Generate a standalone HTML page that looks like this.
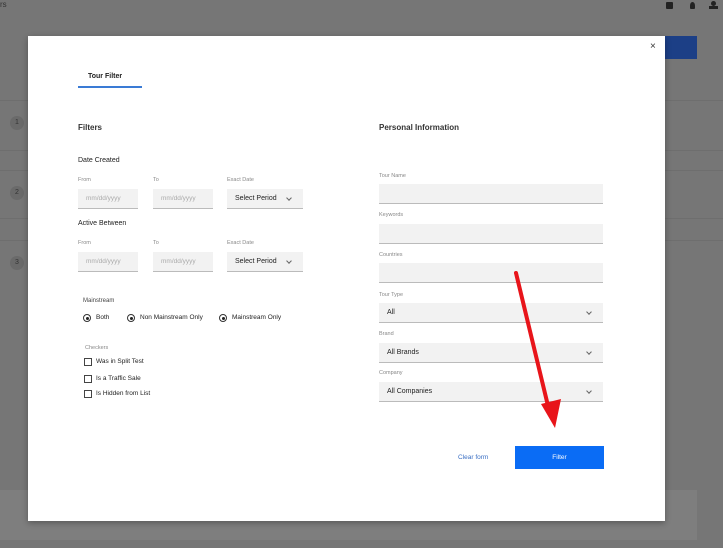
<!DOCTYPE html>
<html><head><style>
*{margin:0;padding:0;box-sizing:border-box}
body{width:723px;height:548px;background:#767676;font-family:"Liberation Sans",sans-serif;position:relative;overflow:hidden;color:#222}
.a{position:absolute}
.lbl{position:absolute;font-size:5.5px;color:#888}
.inp{position:absolute;background:#f2f2f2;border-bottom:1px solid #bbb;font-size:6.5px;color:#aaa;padding-left:8px;display:flex;align-items:center}
.sel{position:absolute;background:#f2f2f2;border-bottom:1px solid #bbb;font-size:7px;color:#222;padding-left:8px;display:flex;align-items:center}
.sel:after{content:"";position:absolute;right:12px;top:7px;width:3px;height:3px;border-right:1px solid #666;border-bottom:1px solid #666;transform:rotate(45deg)}
.t{position:absolute;font-size:7px;color:#222;white-space:nowrap}
.rad{position:absolute;width:8px;height:8px;border:1px solid #333;border-radius:50%}
.rad:after{content:"";position:absolute;left:1.5px;top:1.5px;width:3px;height:3px;background:#222;border-radius:50%}
.cb{position:absolute;width:8px;height:8px;border:1px solid #444}
.num{position:absolute;width:14px;height:14px;border-radius:50%;background:#6a6a6a;font-size:7px;color:#333;text-align:center;line-height:14px}
</style></head><body>
<div class="a" style="left:0;top:0;font-size:8px;color:#333">rs</div>
<div class="a" style="left:666px;top:2px;width:7px;height:7px;background:#222;border-radius:1px"></div>
<div class="a" style="left:690px;top:2px;width:5px;height:7px;background:#222;border-radius:50% 50% 1px 1px"></div>
<div class="a" style="left:711px;top:1px;width:5px;height:5px;background:#222;border-radius:50%"></div>
<div class="a" style="left:709px;top:6px;width:9px;height:3px;background:#222"></div>
<div class="a" style="left:660px;top:36px;width:37px;height:23px;background:#1c3f86"></div>
<div class="a" style="left:0;top:100px;width:723px;height:1px;background:#6e6e6e"></div>
<div class="a" style="left:0;top:150px;width:723px;height:1px;background:#6e6e6e"></div>
<div class="a" style="left:0;top:170px;width:723px;height:1px;background:#6e6e6e"></div>
<div class="a" style="left:0;top:218px;width:723px;height:1px;background:#6e6e6e"></div>
<div class="a" style="left:0;top:240px;width:723px;height:1px;background:#6e6e6e"></div>
<div class="num" style="left:10px;top:116px">1</div>
<div class="num" style="left:10px;top:186px">2</div>
<div class="num" style="left:10px;top:256px">3</div>
<div class="a" style="left:0;top:490px;width:697px;height:50px;background:#7e7e7e"></div>

<div class="a" style="left:28px;top:36px;width:637px;height:485px;background:#fff;box-shadow:0 2px 6px rgba(0,0,0,.3)"></div>
<div class="a" style="left:650px;top:41px;font-size:10px;color:#333">×</div>
<div class="t" style="left:88px;top:73px;font-weight:bold;font-size:7px">Tour Filter</div>
<div class="a" style="left:78px;top:86px;width:64px;height:1.5px;background:#3a7bd5"></div>

<div class="t" style="left:78px;top:123px;font-size:8px;font-weight:bold;color:#333">Filters</div>
<div class="t" style="left:78px;top:157px">Date Created</div>
<div class="lbl" style="left:78px;top:177px">From</div>
<div class="lbl" style="left:153px;top:177px">To</div>
<div class="lbl" style="left:227px;top:177px">Exact Date</div>
<div class="inp" style="left:78px;top:189px;width:60px;height:20px">mm/dd/yyyy</div>
<div class="inp" style="left:153px;top:189px;width:60px;height:20px">mm/dd/yyyy</div>
<div class="sel" style="left:227px;top:189px;width:76px;height:20px">Select Period</div>
<div class="t" style="left:78px;top:220px">Active Between</div>
<div class="lbl" style="left:78px;top:240px">From</div>
<div class="lbl" style="left:153px;top:240px">To</div>
<div class="lbl" style="left:227px;top:240px">Exact Date</div>
<div class="inp" style="left:78px;top:252px;width:60px;height:20px">mm/dd/yyyy</div>
<div class="inp" style="left:153px;top:252px;width:60px;height:20px">mm/dd/yyyy</div>
<div class="sel" style="left:227px;top:252px;width:76px;height:20px">Select Period</div>

<div class="t" style="left:83px;top:298px;font-size:6px;color:#444">Mainstream</div>
<div class="rad" style="left:83px;top:314px"></div><div class="t" style="left:96px;top:314px;font-size:6.5px">Both</div>
<div class="rad" style="left:127px;top:314px"></div><div class="t" style="left:140px;top:314px;font-size:6.5px">Non Mainstream Only</div>
<div class="rad" style="left:219px;top:314px"></div><div class="t" style="left:232px;top:314px;font-size:6.5px">Mainstream Only</div>
<div class="lbl" style="left:85px;top:345px">Checkers</div>
<div class="cb" style="left:84px;top:358px"></div><div class="t" style="left:96px;top:358px;font-size:6.5px">Was in Split Test</div>
<div class="cb" style="left:84px;top:375px"></div><div class="t" style="left:96px;top:375px;font-size:6.5px">Is a Traffic Sale</div>
<div class="cb" style="left:84px;top:390px"></div><div class="t" style="left:96px;top:390px;font-size:6.5px">Is Hidden from List</div>

<div class="t" style="left:379px;top:123px;font-size:8px;font-weight:bold;color:#333">Personal Information</div>
<div class="lbl" style="left:379px;top:173px">Tour Name</div>
<div class="inp" style="left:379px;top:184px;width:224px;height:20px"></div>
<div class="lbl" style="left:379px;top:212px">Keywords</div>
<div class="inp" style="left:379px;top:224px;width:224px;height:20px"></div>
<div class="lbl" style="left:379px;top:252px">Countries</div>
<div class="inp" style="left:379px;top:263px;width:224px;height:20px"></div>
<div class="lbl" style="left:379px;top:292px">Tour Type</div>
<div class="sel" style="left:379px;top:303px;width:224px;height:20px">All</div>
<div class="lbl" style="left:379px;top:331px">Brand</div>
<div class="sel" style="left:379px;top:343px;width:224px;height:20px">All Brands</div>
<div class="lbl" style="left:379px;top:370px">Company</div>
<div class="sel" style="left:379px;top:382px;width:224px;height:20px">All Companies</div>

<div class="t" style="left:458px;top:454px;font-size:6.5px;color:#3a6fc4">Clear form</div>
<div class="a" style="left:515px;top:446px;width:89px;height:23px;background:#0a6cf5;color:#fff;font-size:6.5px;text-align:center;line-height:23px">Filter</div>

<svg class="a" style="left:0;top:0" width="723" height="548">
<line x1="516" y1="273" x2="549" y2="410" stroke="#e8141a" stroke-width="4" stroke-linecap="round"/>
<polygon points="541,404 561,399 555,428" fill="#e8141a"/>
</svg>
</body></html>
